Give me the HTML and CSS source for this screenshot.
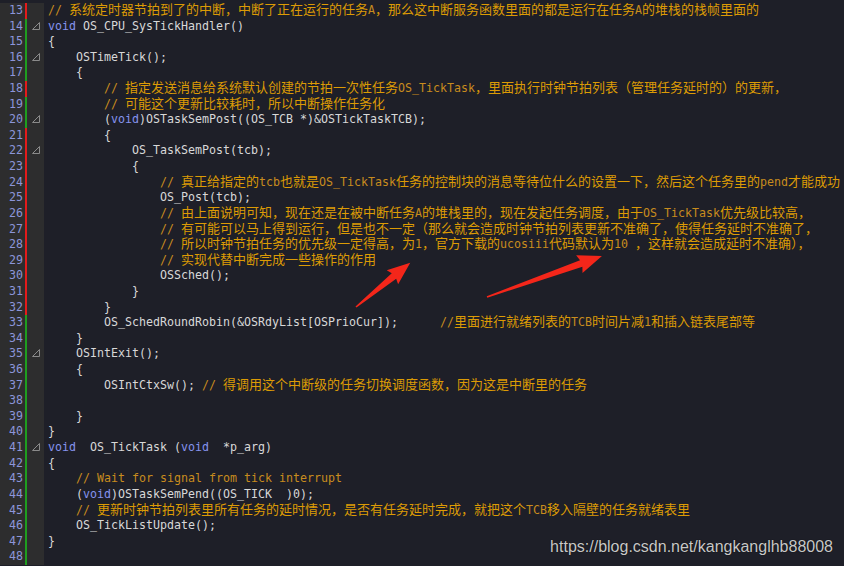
FILE: index.html
```html
<!DOCTYPE html>
<html>
<head>
<meta charset="utf-8">
<link rel="stylesheet" href="styles.css">
</head>
<body>
<div class="editor">
<div class="ln"><div class="g"><span class="n">13</span><span class="bar r"></span></div><div class="c"><span class="cm">// <span class="zh">系统定时器节拍到了的中断，中断了正在运行的任务</span>A<span class="zh">，那么这中断服务函数里面的都是运行在任务</span>A<span class="zh">的堆栈的栈帧里面的</span></span></div></div>
<div class="ln"><div class="g"><span class="n">14</span><span class="bar gr"></span><svg class="fold" viewBox="0 0 8 8"><path d="M0.5 7.5 L7.5 0.5 V7.5 Z"/></svg></div><div class="c"><span class="kw">void</span> OS_CPU_SysTickHandler()</div></div>
<div class="ln"><div class="g"><span class="n">15</span><span class="bar gr"></span></div><div class="c">{</div></div>
<div class="ln"><div class="g"><span class="n">16</span><span class="bar gr"></span><svg class="fold" viewBox="0 0 8 8"><path d="M0.5 7.5 L7.5 0.5 V7.5 Z"/></svg></div><div class="c">    OSTimeTick();</div></div>
<div class="ln"><div class="g"><span class="n">17</span><span class="bar gr"></span></div><div class="c">    {</div></div>
<div class="ln"><div class="g"><span class="n">18</span><span class="bar r"></span></div><div class="c">        <span class="cm">// <span class="zh">指定发送消息给系统默认创建的节拍一次性任务</span>OS_TickTask<span class="zh">，里面执行时钟节拍列表（管理任务延时的）的更新，</span></span></div></div>
<div class="ln"><div class="g"><span class="n">19</span><span class="bar gr"></span></div><div class="c">        <span class="cm">// <span class="zh">可能这个更新比较耗时，所以中断操作任务化</span></span></div></div>
<div class="ln"><div class="g"><span class="n">20</span><span class="bar gr"></span><svg class="fold" viewBox="0 0 8 8"><path d="M0.5 7.5 L7.5 0.5 V7.5 Z"/></svg></div><div class="c">        (<span class="kw">void</span>)OSTaskSemPost((OS_TCB *)&amp;OSTickTaskTCB);</div></div>
<div class="ln"><div class="g"><span class="n">21</span><span class="bar r"></span></div><div class="c">        {</div></div>
<div class="ln"><div class="g"><span class="n">22</span><span class="bar r"></span><svg class="fold" viewBox="0 0 8 8"><path d="M0.5 7.5 L7.5 0.5 V7.5 Z"/></svg></div><div class="c">            OS_TaskSemPost(tcb);</div></div>
<div class="ln"><div class="g"><span class="n">23</span><span class="bar r"></span></div><div class="c">            {</div></div>
<div class="ln"><div class="g"><span class="n">24</span><span class="bar r"></span></div><div class="c">                <span class="cm">// <span class="zh">真正给指定的</span>tcb<span class="zh">也就是</span>OS_TickTask<span class="zh">任务的控制块的消息等待位什么的设置一下，然后这个任务里的</span>pend<span class="zh">才能成功</span></span></div></div>
<div class="ln"><div class="g"><span class="n">25</span><span class="bar r"></span></div><div class="c">                OS_Post(tcb);</div></div>
<div class="ln"><div class="g"><span class="n">26</span><span class="bar r"></span></div><div class="c">                <span class="cm">// <span class="zh">由上面说明可知，现在还是在被中断任务</span>A<span class="zh">的堆栈里的，现在发起任务调度，由于</span>OS_TickTask<span class="zh">优先级比较高，</span></span></div></div>
<div class="ln"><div class="g"><span class="n">27</span><span class="bar r"></span></div><div class="c">                <span class="cm">// <span class="zh">有可能可以马上得到运行，但是也不一定（那么就会造成时钟节拍列表更新不准确了，使得任务延时不准确了，</span></span></div></div>
<div class="ln"><div class="g"><span class="n">28</span><span class="bar r"></span></div><div class="c">                <span class="cm">// <span class="zh">所以时钟节拍任务的优先级一定得高，为</span>1<span class="zh">，官方下载的</span>ucosiii<span class="zh">代码默认为</span>10 <span class="zh">，这样就会造成延时不准确），</span></span></div></div>
<div class="ln"><div class="g"><span class="n">29</span><span class="bar r"></span></div><div class="c">                <span class="cm">// <span class="zh">实现代替中断完成一些操作的作用</span></span></div></div>
<div class="ln"><div class="g"><span class="n">30</span><span class="bar r"></span></div><div class="c">                OSSched();</div></div>
<div class="ln"><div class="g"><span class="n">31</span><span class="bar r"></span></div><div class="c">            }</div></div>
<div class="ln"><div class="g"><span class="n">32</span><span class="bar r"></span></div><div class="c">        }</div></div>
<div class="ln"><div class="g"><span class="n">33</span><span class="bar gr"></span></div><div class="c">        OS_SchedRoundRobin(&amp;OSRdyList[OSPrioCur]);      <span class="cm">//<span class="zh">里面进行就绪列表的</span>TCB<span class="zh">时间片减</span>1<span class="zh">和插入链表尾部等</span></span></div></div>
<div class="ln"><div class="g"><span class="n">34</span><span class="bar gr"></span></div><div class="c">    }</div></div>
<div class="ln"><div class="g"><span class="n">35</span><span class="bar gr"></span><svg class="fold" viewBox="0 0 8 8"><path d="M0.5 7.5 L7.5 0.5 V7.5 Z"/></svg></div><div class="c">    OSIntExit();</div></div>
<div class="ln"><div class="g"><span class="n">36</span><span class="bar gr"></span></div><div class="c">    {</div></div>
<div class="ln"><div class="g"><span class="n">37</span><span class="bar gr"></span></div><div class="c">        OSIntCtxSw(); <span class="cm">// <span class="zh">得调用这个中断级的任务切换调度函数，因为这是中断里的任务</span></span></div></div>
<div class="ln"><div class="g"><span class="n">38</span><span class="bar gr"></span></div><div class="c"></div></div>
<div class="ln"><div class="g"><span class="n">39</span><span class="bar gr"></span></div><div class="c">    }</div></div>
<div class="ln"><div class="g"><span class="n">40</span><span class="bar gr"></span></div><div class="c">}</div></div>
<div class="ln"><div class="g"><span class="n">41</span><span class="bar gr"></span><svg class="fold" viewBox="0 0 8 8"><path d="M0.5 7.5 L7.5 0.5 V7.5 Z"/></svg></div><div class="c"><span class="kw">void</span>  OS_TickTask (<span class="kw">void</span>  *p_arg)</div></div>
<div class="ln"><div class="g"><span class="n">42</span><span class="bar gr"></span></div><div class="c">{</div></div>
<div class="ln"><div class="g"><span class="n">43</span><span class="bar gr"></span></div><div class="c">    <span class="cm">// Wait for signal from tick interrupt</span></div></div>
<div class="ln"><div class="g"><span class="n">44</span><span class="bar gr"></span></div><div class="c">    (<span class="kw">void</span>)OSTaskSemPend((OS_TICK  )0);</div></div>
<div class="ln"><div class="g"><span class="n">45</span><span class="bar gr"></span></div><div class="c">    <span class="cm">// <span class="zh">更新时钟节拍列表里所有任务的延时情况，是否有任务延时完成，就把这个</span>TCB<span class="zh">移入隔壁的任务就绪表里</span></span></div></div>
<div class="ln"><div class="g"><span class="n">46</span><span class="bar gr"></span></div><div class="c">    OS_TickListUpdate();</div></div>
<div class="ln"><div class="g"><span class="n">47</span><span class="bar gr"></span></div><div class="c">}</div></div>
<div class="ln"><div class="g"><span class="n">48</span><span class="bar gr"></span></div><div class="c"></div></div>
</div>
<svg class="arrows" viewBox="0 0 844 566" width="844" height="566">
<g transform="translate(356,307) rotate(-39.2)"><polygon points="0,-0.8 49,-3.5 47,-9 70,0 47,9 49,3.5 0,0.8"/></g>
<g transform="translate(487,297) rotate(-19.6)"><polygon points="0,-0.8 100,-3.5 98,-9.5 122,0 98,9.5 100,3.5 0,0.8"/></g>
</svg>
<div class="mark">https://blog.csdn.net/kangkanglhb88008</div>
</body>
</html>
```
FILE: styles.css
```css
html, body {
  margin: 0;
  padding: 0;
}
body {
  width: 844px;
  height: 566px;
  overflow: hidden;
  background: #1e1f28;
  position: relative;
}
.editor {
  padding-top: 3px;
  font-family: "DejaVu Sans Mono", "Liberation Mono", monospace;
  font-size: 11.63px;
  color: #d8d8d8;
}
.ln {
  display: grid;
  grid-template-columns: 44px 1fr;
  height: 15.62px;
  line-height: 15.62px;
}
.g {
  background: #2d2d2e;
  display: flex;
  align-items: stretch;
  position: relative;
}
.n {
  width: 23px;
  text-align: right;
  color: #8c95d9;
}
.bar {
  width: 2px;
  margin-left: 2px;
}
.bar.r { background: #e31b1b; }
.bar.gr { background: #1f9d1f; }
.fold {
  position: absolute;
  left: 32px;
  top: 3px;
  width: 8px;
  height: 8px;
  fill: none;
  stroke: #8a8a8a;
  stroke-width: 1;
}
.c {
  white-space: pre;
  padding-left: 4px;
  overflow: visible;
}
.kw { color: #8593ee; }
.cm { color: #c88c1e; }
.zh {
  font-family: "Noto Sans CJK SC", sans-serif;
  font-size: 13px;
  line-height: 0;
  color: #dc9b05;
}
.arrows {
  position: absolute;
  left: 0;
  top: 0;
  fill: #f4261a;
  pointer-events: none;
}
.mark {
  position: absolute;
  right: 11px;
  top: 539px;
  font-family: "Liberation Sans", Arial, sans-serif;
  font-size: 16px;
  line-height: 16px;
  color: #c8c8c8;
  text-shadow: 0 0 1px #000;
}
```
